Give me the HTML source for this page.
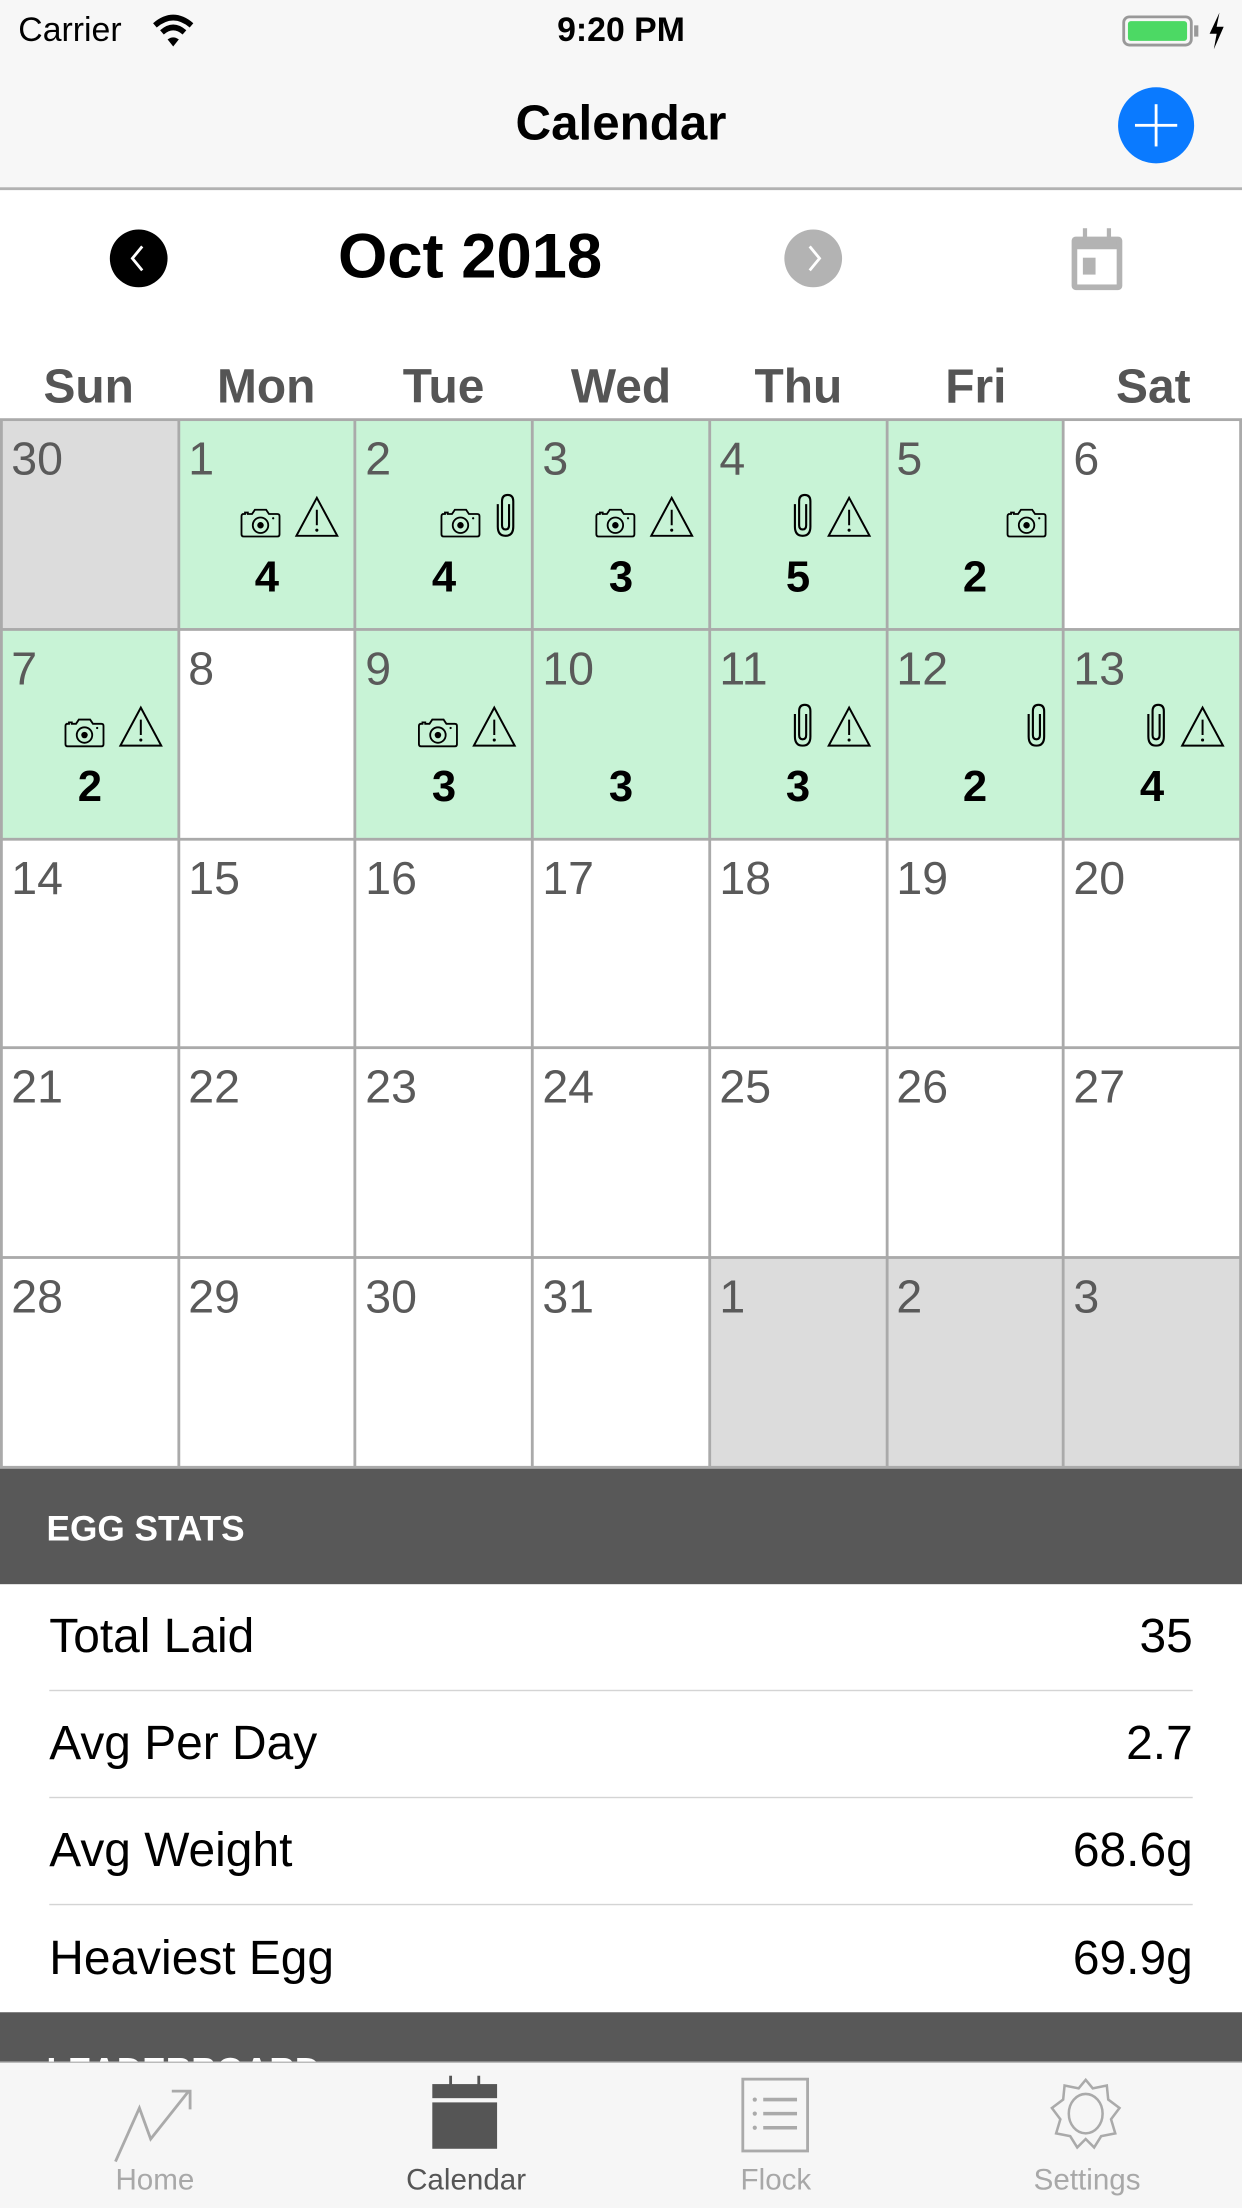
<!DOCTYPE html>
<html><head><meta charset="utf-8">
<style>
*{margin:0;padding:0;box-sizing:border-box}
html,body{width:1242px;height:2208px;overflow:hidden;background:#fff}
#w{position:absolute;left:0;top:0;width:882px;height:1568px;transform:scale(1.408163);transform-origin:0 0;font-family:"Liberation Sans",sans-serif;background:#fff}
.abs{position:absolute}
#top{left:0;top:0;width:882px;height:135px;background:#f7f7f7;border-bottom:2px solid #b2b2b2}
.grid{position:absolute;left:0;top:297px;width:882px;height:746px;background:#aaa;display:grid;grid-template-columns:repeat(7,1fr);grid-template-rows:repeat(5,1fr);gap:2px;padding:2px}
.c{position:relative;background:#fff}
.g{background:#c8f3d6}.x{background:#dcdcdc}
.d{position:absolute;left:6px;top:8px;font-size:33px;color:#5a5a5a}
.ic{position:absolute;right:10px;top:53px;display:flex;gap:9px;align-items:flex-end;height:30px}
.n{position:absolute;left:0;right:0;top:93px;text-align:center;font-size:31px;font-weight:bold;color:#000}
.wd{position:absolute;top:256px;width:126px;text-align:center;font-size:34px;font-weight:bold;color:#555}
.row{position:absolute;left:35px;right:35px;height:76px;font-size:34px;color:#000;display:flex;justify-content:space-between;align-items:center;border-bottom:1.5px solid #d4d4d4}
.tab{position:absolute;top:1537px;font-size:21px;color:#a8a8a8;text-align:center;width:160px}
</style></head><body><div id="w">
<div id="top" class="abs">
 <div class="abs" style="left:13px;top:8px;font-size:24px">Carrier</div>
 <svg class="abs" style="left:108px;top:10px" width="30" height="24" viewBox="0 0 30 24"><path d="M2 8 Q15 -3 28 8" stroke="#000" stroke-width="4" fill="none"/><path d="M7 13 Q15 6 23 13" stroke="#000" stroke-width="4" fill="none"/><path d="M11 18 L15 23 L19 18 Q15 15 11 18Z" fill="#000"/></svg>
 <div class="abs" style="left:0;width:882px;top:8px;text-align:center;font-size:24px;font-weight:bold">9:20 PM</div>
 <div class="abs" style="left:797px;top:11px;width:50px;height:22px;border:2.5px solid #999;border-radius:5px;padding:2px"><div style="width:100%;height:100%;background:#4cd964;border-radius:2px"></div></div>
 <div class="abs" style="left:848px;top:18px;width:3px;height:8px;background:#999"></div>
 <svg class="abs" style="left:857px;top:9px" width="14" height="26" viewBox="0 0 14 26"><path d="M9 0 L2 15 H7 L5 26 L12 10 H7Z" fill="#000"/></svg>
 <div class="abs" style="left:0;width:882px;top:68px;text-align:center;font-size:35px;font-weight:bold">Calendar</div>
 <div class="abs" style="left:794px;top:62px;width:54px;height:54px;border-radius:50%;background:#0a7aff"></div>
 <div class="abs" style="left:806px;top:88px;width:30px;height:2px;background:#fff"></div>
 <div class="abs" style="left:820px;top:74px;width:2px;height:30px;background:#fff"></div>
</div>
<div class="abs" style="left:78px;top:163px;width:41px;height:41px;border-radius:50%;background:#000"></div>
<svg class="abs" style="left:78px;top:163px" width="41" height="41"><path d="M23 12 L16 20.5 L23 29" stroke="#fff" stroke-width="2" fill="none"/></svg>
<div class="abs" style="left:240px;top:156px;font-size:45px;font-weight:bold">Oct 2018</div>
<div class="abs" style="left:557px;top:163px;width:41px;height:41px;border-radius:50%;background:#b3b3b3"></div>
<svg class="abs" style="left:557px;top:163px" width="41" height="41"><path d="M18 12 L25 20.5 L18 29" stroke="#fff" stroke-width="2" fill="none"/></svg>
<svg class="abs" style="left:758px;top:162px" width="42" height="46" viewBox="0 0 42 46"><rect x="3" y="6" width="36" height="38" rx="3" fill="#b3b3b3"/><rect x="7" y="15" width="28" height="25" fill="#fff"/><rect x="7" y="9" width="28" height="3" fill="#b3b3b3"/><rect x="11" y="0" width="3" height="8" fill="#b3b3b3"/><rect x="28" y="0" width="3" height="8" fill="#b3b3b3"/><rect x="11" y="21" width="9" height="12" fill="#b3b3b3"/></svg>
<div class="wd" style="left:0">Sun</div><div class="wd" style="left:126px">Mon</div><div class="wd" style="left:252px">Tue</div><div class="wd" style="left:378px">Wed</div><div class="wd" style="left:504px">Thu</div><div class="wd" style="left:630px">Fri</div><div class="wd" style="left:756px">Sat</div>
<svg width="0" height="0" style="position:absolute"><defs>
<symbol id="cam" viewBox="0 0 30 22"><path d="M2 5 H4 V4 H6 V5 H9 L11 2 H19 L21 5 H27 Q28.5 5 28.5 6.5 V19.5 Q28.5 21 27 21 H3 Q1.5 21 1.5 19.5 V6.5 Q1.5 5 3 5Z" fill="none" stroke="#000" stroke-width="1.3"/><circle cx="15" cy="13" r="5.5" fill="none" stroke="#000" stroke-width="1.3"/><circle cx="15" cy="13" r="2.3" fill="#000"/><circle cx="24" cy="8" r="0.8" fill="#000"/></symbol>
<symbol id="war" viewBox="0 0 32 30"><path d="M16 1.5 L30.5 28.5 H1.5Z" fill="none" stroke="#000" stroke-width="1.4"/><path d="M16 10 V21" stroke="#000" stroke-width="1.4"/><circle cx="16" cy="24.5" r="1.1" fill="#000"/></symbol>
<symbol id="clip" viewBox="0 0 16 32"><path d="M2.5 8 V24 Q2.5 30.5 8 30.5 Q13.5 30.5 13.5 24 V6 Q13.5 1.5 9.5 1.5 Q5.5 1.5 5.5 6 V23 Q5.5 26 8 26 Q10.5 26 10.5 23 V8" fill="none" stroke="#000" stroke-width="1.5"/></symbol>
</defs></svg>
<div class="grid">
<div class="c x"><span class="d">30</span></div>
<div class="c g"><span class="d">1</span><div class="ic"><svg width="30" height="22"><use href="#cam"/></svg><svg width="32" height="30"><use href="#war"/></svg></div><div class="n">4</div></div>
<div class="c g"><span class="d">2</span><div class="ic"><svg width="30" height="22"><use href="#cam"/></svg><svg width="16" height="32"><use href="#clip"/></svg></div><div class="n">4</div></div>
<div class="c g"><span class="d">3</span><div class="ic"><svg width="30" height="22"><use href="#cam"/></svg><svg width="32" height="30"><use href="#war"/></svg></div><div class="n">3</div></div>
<div class="c g"><span class="d">4</span><div class="ic"><svg width="16" height="32"><use href="#clip"/></svg><svg width="32" height="30"><use href="#war"/></svg></div><div class="n">5</div></div>
<div class="c g"><span class="d">5</span><div class="ic"><svg width="30" height="22"><use href="#cam"/></svg></div><div class="n">2</div></div>
<div class="c"><span class="d">6</span></div>
<div class="c g"><span class="d">7</span><div class="ic"><svg width="30" height="22"><use href="#cam"/></svg><svg width="32" height="30"><use href="#war"/></svg></div><div class="n">2</div></div>
<div class="c"><span class="d">8</span></div>
<div class="c g"><span class="d">9</span><div class="ic"><svg width="30" height="22"><use href="#cam"/></svg><svg width="32" height="30"><use href="#war"/></svg></div><div class="n">3</div></div>
<div class="c g"><span class="d">10</span><div class="n">3</div></div>
<div class="c g"><span class="d">11</span><div class="ic"><svg width="16" height="32"><use href="#clip"/></svg><svg width="32" height="30"><use href="#war"/></svg></div><div class="n">3</div></div>
<div class="c g"><span class="d">12</span><div class="ic"><svg width="16" height="32"><use href="#clip"/></svg></div><div class="n">2</div></div>
<div class="c g"><span class="d">13</span><div class="ic"><svg width="16" height="32"><use href="#clip"/></svg><svg width="32" height="30"><use href="#war"/></svg></div><div class="n">4</div></div>
<div class="c"><span class="d">14</span></div><div class="c"><span class="d">15</span></div><div class="c"><span class="d">16</span></div><div class="c"><span class="d">17</span></div><div class="c"><span class="d">18</span></div><div class="c"><span class="d">19</span></div><div class="c"><span class="d">20</span></div>
<div class="c"><span class="d">21</span></div><div class="c"><span class="d">22</span></div><div class="c"><span class="d">23</span></div><div class="c"><span class="d">24</span></div><div class="c"><span class="d">25</span></div><div class="c"><span class="d">26</span></div><div class="c"><span class="d">27</span></div>
<div class="c"><span class="d">28</span></div><div class="c"><span class="d">29</span></div><div class="c"><span class="d">30</span></div><div class="c"><span class="d">31</span></div><div class="c x"><span class="d">1</span></div><div class="c x"><span class="d">2</span></div><div class="c x"><span class="d">3</span></div>
</div>
<div class="abs" style="left:0;top:1043px;width:882px;height:82px;background:#585858"></div>
<div class="abs" style="left:33px;top:1072px;font-size:25px;font-weight:bold;color:#fff">EGG STATS</div>
<div class="row" style="top:1125px"><span>Total Laid</span><span>35</span></div>
<div class="row" style="top:1201px"><span>Avg Per Day</span><span>2.7</span></div>
<div class="row" style="top:1277px"><span>Avg Weight</span><span>68.6g</span></div>
<div class="row" style="top:1353px;border:none"><span>Heaviest Egg</span><span>69.9g</span></div>
<div class="abs" style="left:0;top:1429px;width:882px;height:36px;background:#585858;overflow:hidden"><div class="abs" style="left:33px;top:28px;font-size:25px;font-weight:bold;color:#fff">LEADERBOARD</div></div>
<div class="abs" style="left:0;top:1464px;width:882px;height:104px;background:#f6f6f6;border-top:1.5px solid #b8b8b8"></div>
<svg class="abs" style="left:80px;top:1481px" width="62" height="56" viewBox="0 0 62 56"><path d="M2 54 L19 16 L27 38 L54 4 M42 4 H55 V17" stroke="#aaa" stroke-width="2" fill="none"/></svg>
<svg class="abs" style="left:305px;top:1474px" width="50" height="52" viewBox="0 0 50 52"><rect x="2" y="6" width="46" height="10" fill="#555"/><rect x="2" y="19" width="46" height="33" fill="#555"/><rect x="14" y="0" width="2" height="10" fill="#555"/><rect x="34" y="0" width="2" height="10" fill="#555"/></svg>
<svg class="abs" style="left:526px;top:1475px" width="50" height="54" viewBox="0 0 50 54"><rect x="1.5" y="1.5" width="46" height="51" fill="none" stroke="#aaa" stroke-width="2"/><circle cx="10" cy="16" r="1.5" fill="#aaa"/><circle cx="10" cy="26" r="1.5" fill="#aaa"/><circle cx="10" cy="36" r="1.5" fill="#aaa"/><path d="M16 16 H40 M16 26 H40 M16 36 H40" stroke="#aaa" stroke-width="2.5"/></svg>
<svg class="abs" style="left:744px;top:1475px" width="54" height="52" viewBox="0 0 54 52"><path d="M27 2 L32 8 L42 6 L43 16 L51 22 L45 30 L48 40 L38 42 L33 50 L27 44 L21 50 L16 42 L6 40 L9 30 L3 22 L11 16 L12 6 L22 8Z" fill="none" stroke="#aaa" stroke-width="1.8"/><ellipse cx="27" cy="26" rx="12" ry="14" fill="none" stroke="#aaa" stroke-width="1.8"/></svg>
<div class="tab" style="left:30px">Home</div>
<div class="tab" style="left:251px;color:#555">Calendar</div>
<div class="tab" style="left:471px">Flock</div>
<div class="tab" style="left:692px">Settings</div>
</div></body></html>
